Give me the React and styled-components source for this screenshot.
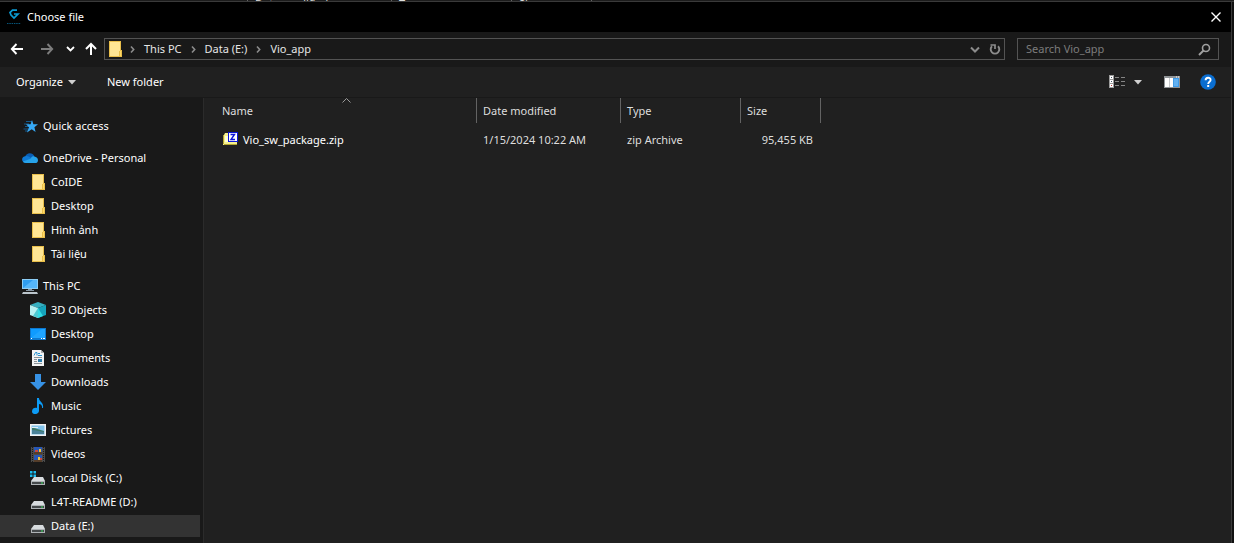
import styled, { createGlobalStyle } from 'styled-components'

const GlobalStyle = createGlobalStyle`
  * {
    box-sizing: border-box;
  }
  body {
    margin: 0;
    background-color: #111;
    color: #fff;
    font-family: "Noto Sans", "Open Sans", sans-serif;
    font-size: 11px;
    line-height: 16px;
  }
  button, input {
    font: inherit;
    color: inherit;
  }
`

const Screen = styled.div`
  display: flex;
  flex-direction: column;
  min-height: 100vh;
`

const BackWindow = styled.div`
  display: flex;
  height: 2px;
  padding-left: 247px;
  overflow: hidden;
  line-height: 8px;
  color: #dedede;
  background-color: #1c1c1c;
  border-bottom: 1px solid #3a3a3a;
`

const BackColumn = styled.span`
  width: ${({ $width }) => $width}px;
  padding-left: 7px;
  border-left: 1px solid #636363;
`

const Dialog = styled.div`
  flex: 1;
  display: flex;
  flex-direction: column;
  margin-right: 2px;
  border-right: 1px solid #3a3a3a;
  background-color: #202020;
`

const TitleBar = styled.header`
  display: flex;
  align-items: center;
  height: 30px;
  padding: 0 6px;
  gap: 5px;
  background-color: #000;
`

const Title = styled.h1`
  flex: 1;
  margin: 0;
  font-size: 11px;
  font-weight: 400;
`

const IconButton = styled.button`
  display: flex;
  align-items: center;
  justify-content: center;
  flex: none;
  width: ${({ $width }) => $width}px;
  height: 20px;
  padding: 0;
  border: none;
  background: none;
  color: ${({ $color }) => $color || '#fff'};

  &:hover {
    background-color: #333;
  }
`

const NavBar = styled.div`
  display: flex;
  align-items: center;
  height: 35px;
  padding: 0 12px 1px 2px;
  background-color: #191919;
`

const AddressBar = styled.nav`
  flex: 1;
  display: flex;
  align-items: center;
  height: 22px;
  padding-left: 2px;
  border: 1px solid #535353;
`

const Crumbs = styled.div`
  flex: 1;
  display: flex;
  align-items: center;
  gap: 8px;
  padding-left: 6px;
`

const Crumb = styled.a`
  color: #e6e6e6;
  text-decoration: none;
`

const SearchBox = styled.label`
  display: flex;
  align-items: center;
  width: 202px;
  height: 22px;
  margin-left: 12px;
  padding: 0 6px 0 8px;
  border: 1px solid #535353;
  color: #a0a0a0;
`

const SearchInput = styled.input`
  flex: 1;
  min-width: 0;
  padding: 0;
  border: none;
  outline: none;
  background: none;

  &::placeholder {
    color: #7c7c7c;
    opacity: 1;
  }
`

const ToolBar = styled.div`
  display: flex;
  align-items: center;
  height: 31px;
  padding: 0 9px 1px 10px;
  border-bottom: 1px solid #191919;
`

const ToolButton = styled.button`
  display: flex;
  align-items: center;
  gap: 5px;
  height: 24px;
  margin-right: 19px;
  padding: 0 6px;
  border: none;
  background: none;

  &:hover {
    background-color: #333;
  }
`

const ToolSpacer = styled.div`
  flex: 1;
`

const Content = styled.div`
  flex: 1;
  display: flex;
`

const SideBar = styled.nav`
  display: flex;
  flex-direction: column;
  gap: 10px;
  flex: none;
  width: 204px;
  padding: 17px 3px 5px 0;
  background-color: #191919;
  border-right: 1px solid #2b2b2b;
`

const Tree = styled.ul`
  display: flex;
  flex-direction: column;
  gap: 2px;
  margin: 0;
  padding: 0;
  list-style: none;
`

const TreeItem = styled.a`
  display: flex;
  align-items: center;
  gap: 5px;
  height: 22px;
  padding-left: ${({ $nested }) => ($nested ? 30 : 22)}px;
  background-color: ${({ $active }) => ($active ? '#333' : 'transparent')};
  color: #fff;
  text-decoration: none;

  &:hover {
    background-color: #333;
  }
`

const Files = styled.main`
  flex: 1;
  min-width: 0;
`

const FileTable = styled.table`
  border-collapse: separate;
  border-spacing: 0;
  table-layout: fixed;
  width: 617px;
  color: #dedede;
`

const HeadCell = styled.th`
  position: relative;
  width: ${({ $width }) => $width}px;
  height: 25px;
  padding: 0 6px;
  border-right: 1px solid #636363;
  font-weight: 400;
  text-align: left;

  &:first-child {
    padding-left: 18px;
  }
`

const SortMark = styled.span`
  position: absolute;
  top: 0;
  left: 0;
  right: 0;
  display: flex;
  justify-content: center;
  padding-left: 12px;
`

const Cell = styled.td`
  height: 34px;
  padding: 0 8px 0 6px;
  text-align: ${({ $align }) => $align || 'left'};

  &:first-child {
    padding-left: 18px;
  }
`

const FileName = styled.span`
  display: flex;
  align-items: center;
  gap: 5px;
  color: #fff;
`

const Svg = styled.svg`
  display: block;
  flex: none;
`

const Icon = ({ size = 16, children }) => (
  <Svg width={size} height={size} viewBox={`0 0 ${size} ${size}`} aria-hidden="true">
    {children}
  </Svg>
)

const AppLogo = () => (
  <Icon>
    <path d="M11 1.200H6.500L4 3.500 5 6l3 3 4-4H8" fill="none" stroke="#0b9bd3" strokeWidth="1.700" />
    <path d="M1 14.500h14" stroke="#07557a" strokeDasharray="1.500 .8" />
  </Icon>
)

const CloseIcon = () => (
  <Icon>
    <path d="M3.500 3.500l9 9M12.500 3.500l-9 9" stroke="#fff" strokeWidth="1.400" />
  </Icon>
)

const BackIcon = () => (
  <Icon>
    <path d="M14 8H3M7.500 3 2.800 8l4.700 5" fill="none" stroke="currentColor" strokeWidth="1.900" />
  </Icon>
)

const ForwardIcon = () => (
  <Icon>
    <path d="M2 8h11M8.500 3l4.700 5-4.700 5" fill="none" stroke="currentColor" strokeWidth="1.900" />
  </Icon>
)

const UpIcon = () => (
  <Icon>
    <path d="M8 14V3M3 8l5-5 5 5" fill="none" stroke="currentColor" strokeWidth="2" />
  </Icon>
)

const DownChevron = ({ wide }) => (
  <Icon size={12}>
    <path
      d={wide ? 'M3 4.500l4 4 4-4' : 'M3 4l3.500 3.500L10 4'}
      fill="none"
      stroke="currentColor"
      strokeWidth={wide ? 2 : 1.8}
    />
  </Icon>
)

const CrumbArrow = () => (
  <Svg width="7" height="16" viewBox="0 0 7 16" aria-hidden="true">
    <path d="M2 5.500 4.700 8.500 2 11.500" fill="none" stroke="#8c8c8c" strokeWidth="1.600" />
  </Svg>
)

const RefreshIcon = () => (
  <Icon>
    <path d="M6 5.200A4.300 4.300 0 1 0 12 5.200" fill="none" stroke="currentColor" strokeWidth="1.900" />
    <path d="M4.500 4H9v4" fill="none" stroke="currentColor" strokeWidth="1.700" />
  </Icon>
)

const SearchIcon = () => (
  <Icon>
    <circle cx="10" cy="7" r="3.500" fill="none" stroke="currentColor" strokeWidth="1.600" />
    <path d="M7.500 9.500 3 14" stroke="currentColor" strokeWidth="2" />
  </Icon>
)

const Caret = () => (
  <Svg width="8" height="8" viewBox="0 0 8 8" aria-hidden="true">
    <path d="M0 2h8L4 6.500z" fill="#d0d0d0" />
  </Svg>
)

const ViewIcon = () => (
  <Icon>
    <path d="M0 1h5v13H0z" fill="#9c9c9c" />
    <path d="M1 2h3v3H1zM1 6h3v3H1zM1 10h3v3H1z" fill="#fff" />
    <path d="M2 3h1v1H2zM2 7h1v1H2z" fill="#456" />
    <path d="M2 11h1v1H2z" fill="#b33" />
    <path d="M6 3.500h4M12 3.500h4M6 7.500h4M12 7.500h4M6 11.500h4M12 11.500h4" stroke="#858585" />
  </Icon>
)

const PaneIcon = () => (
  <Icon>
    <path d="M0 2h16v12H0z" fill="#8f9396" />
    <path d="M1 4h4v9H1zM5.500 4H9v9H5.500z" fill="#fff" />
    <path d="M9 4h6v9H9z" fill="#3f9be8" />
    <path d="M10 5h4v7h-4z" fill="#62b1f2" />
    <path d="M12 3h1M14 3h1" stroke="#fff" />
  </Icon>
)

const HelpIcon = () => (
  <Icon>
    <circle cx="8" cy="8" r="7.800" fill="#0a6ed1" />
    <path d="M5.600 6.200C5.600 3 10.600 3 10.600 5.900 10.600 7.700 8.200 7.700 8.200 9.900" fill="none" stroke="#fff" strokeWidth="1.900" />
    <path d="M7.200 11h2v2h-2z" fill="#fff" />
  </Icon>
)

const StarIcon = () => (
  <Icon>
    <path d="M4 3.500h6M2 6h5M3 8.500h5M1.500 11h5M3 13h3" stroke="#14598c" />
    <path d="M10 2l1.400 4.200H16l-3.600 3 1.200 4.800-3.900-2.700L5 14.500l2-5.200L4 6.300h4.600z" fill="#36a9f5" />
  </Icon>
)

const CloudIcon = () => (
  <Icon>
    <path d="M3 7C4 2.500 10.500 1.500 12.500 6.500L8 11 3 8z" fill="#0a5fb5" />
    <path d="M3.500 6.200C7 5.500 9 8 12 11l-8 2C-1.200 12.500-1 6.500 3.500 6.200z" fill="#0f7ad6" />
    <path d="M8.500 8.700C10 5.800 12 6 13 6.800 16.500 7.200 17 12 14 13H4C2 13 1 12 1 11.500z" fill="#27a3ea" />
  </Icon>
)

const FolderIcon = () => (
  <Icon>
    <path d="M2 0h12v9h1v7H2z" fill="#e9bf4b" />
    <path d="M3 1h10v9h-1v5H3z" fill="#ffe694" />
    <path d="M13 10h1v5h-1z" fill="#ffd966" />
  </Icon>
)

const ComputerIcon = () => (
  <Icon>
    <path d="M0 1h16v10H0z" fill="#8ccdf5" />
    <path d="M1 2h14v8H1z" fill="#2e9df0" />
    <path d="M1 10 11 2h4v8z" fill="#55b6fa" />
    <path d="M6 11h4v1h2v1H4v-1h2z" fill="#8796a3" />
    <path d="M1 14h14l1 2H0z" fill="#bcc5cc" />
  </Icon>
)

const CubeIcon = () => (
  <Icon>
    <path d="M8 0l8 3-8 3-8-3z" fill="#36afc0" />
    <path d="M0 3l8 3v10l-8-3z" fill="#b6f1f2" />
    <path d="M16 3 8 6v10l8-3z" fill="#16a4bc" />
    <path d="M8 6l5 8-5 2z" fill="#31dbe3" />
    <path d="M8 6v10l-5-2z" fill="#4ccbd3" />
  </Icon>
)

const DesktopIcon = () => (
  <Icon>
    <path d="M0 2h16v12H0z" fill="#0d78cf" />
    <path d="M1 3h14v9H1z" fill="#0f9bff" />
    <path d="M1 12 12 3h3v9z" fill="#1fa4ff" />
    <path d="M1 12.500h1M11 12.500h1M13 12.500h2" stroke="#fff" />
  </Icon>
)

const DocumentIcon = () => (
  <Icon>
    <path d="M2 0h9l3 3v13H2z" fill="#f3f3f3" />
    <path d="M11 0l3 3h-3z" fill="#a9a9a9" />
    <path d="M4 5.500 5.500 2.500H7v3M8 3.500h2M8 5.500h4" fill="none" stroke="#2792cf" />
    <path d="M4 7.500h8M4 9.500h3M4 11.500h3M4 13.500h8" stroke="#8b9297" />
    <path d="M8 9h4v3H8z" fill="#2b7cab" />
  </Icon>
)

const DownloadIcon = () => (
  <Icon>
    <path d="M5 0h6v8h5l-8 8-8-8h5z" fill="#3792e5" />
  </Icon>
)

const MusicIcon = () => (
  <Icon>
    <path d="M7 0h2c0 4 5 4 4 10h-1c.500-3-1.500-4-3-4v7c-.5 4-7 4-7 .5C2 10 5 9.500 7 10z" fill="#0c9bf5" />
  </Icon>
)

const PictureIcon = () => (
  <Icon>
    <path d="M0 2h16v12H0z" fill="#f2f2f2" />
    <path d="M1.500 3.500h13v9h-13z" fill="#82c4ec" />
    <path d="M2 6c5 0 7 2 12 3v1H2z" fill="#3e7a68" />
    <path d="M2 8c4 0 7 1 12 2v2H2z" fill="#4b839a" />
    <path d="M2 5h6v1H2z" fill="#e1f0f6" />
  </Icon>
)

const VideoIcon = () => (
  <Icon>
    <path d="M1 1h14v15H1z" fill="#4b4b4b" />
    <path d="M2.500 1v15M13.500 1v15" stroke="#1a1a1a" strokeDasharray="1 1" />
    <path d="M4 1h8v7H4zM4 9h8v7H4z" fill="#2857b5" />
    <path d="M4 6h8v2H4zM4 14h8v2H4z" fill="#553d29" />
    <path d="M9 3h2v3H9zM8 11h2v3H8z" fill="#efc23a" />
    <path d="M5 4h3v2H5zM10 12h2v2h-2z" fill="#c8473c" />
  </Icon>
)

const DriveIcon = ({ system }) => (
  <Icon>
    <path d="M4 7h9l2 4H1z" fill="#d8dcdf" />
    <path d="M1 11h14v4H1z" fill="#aeb2b5" />
    <path d="M2 12h12v2H2z" fill="#45494b" />
    <path d="M11 12.500h2v1h-2z" fill="#36e05a" />
    {system && (
      <>
        <path d="M0 1h6v6H0z" fill="#191919" />
        <path d="M0 1h2.500v2.500H0zM3.500 1H6v2.500H3.500zM0 4.500h2.500V7H0zM3.500 4.500H6V7H3.500z" fill="#18bdf2" />
      </>
    )}
  </Icon>
)

const ZipIcon = () => (
  <Icon>
    <path d="M1 3h1l1-2h4v1h8v10l-1 1H1z" fill="#f5f08d" />
    <path d="M1 3h1v9H1zM2 12h13v1H2z" fill="#b4a632" />
    <path d="M3 4h3v6H3z" fill="#ffffd4" />
    <path d="M6 0h10v10H6z" fill="#0a14d8" />
    <path d="M7 1h8v8H7z" fill="#fff" />
    <path d="M8.500 2.500h4L9 7.500h4" fill="none" stroke="#0a14d8" strokeWidth="1.400" />
  </Icon>
)

const crumbs = ['This PC', 'Data (E:)', 'Vio_app']

const backColumns = [
  { label: 'Date modified', width: 144 },
  { label: 'Type', width: 120 },
  { label: 'Size', width: 80 },
  { label: '', width: 20 },
]

const columns = [
  { label: 'Name', width: 273, sorted: true },
  { label: 'Date modified', width: 144 },
  { label: 'Type', width: 120 },
  { label: 'Size', width: 80 },
]

const files = [
  { name: 'Vio_sw_package.zip', date: '1/15/2024 10:22 AM', type: 'zip Archive', size: '95,455 KB' },
]

const tree = [
  [{ label: 'Quick access', icon: <StarIcon /> }],
  [
    { label: 'OneDrive - Personal', icon: <CloudIcon /> },
    { label: 'CoIDE', icon: <FolderIcon />, nested: true },
    { label: 'Desktop', icon: <FolderIcon />, nested: true },
    { label: 'Hình ảnh', icon: <FolderIcon />, nested: true },
    { label: 'Tài liệu', icon: <FolderIcon />, nested: true },
  ],
  [
    { label: 'This PC', icon: <ComputerIcon /> },
    { label: '3D Objects', icon: <CubeIcon />, nested: true },
    { label: 'Desktop', icon: <DesktopIcon />, nested: true },
    { label: 'Documents', icon: <DocumentIcon />, nested: true },
    { label: 'Downloads', icon: <DownloadIcon />, nested: true },
    { label: 'Music', icon: <MusicIcon />, nested: true },
    { label: 'Pictures', icon: <PictureIcon />, nested: true },
    { label: 'Videos', icon: <VideoIcon />, nested: true },
    { label: 'Local Disk (C:)', icon: <DriveIcon system />, nested: true },
    { label: 'L4T-README (D:)', icon: <DriveIcon />, nested: true },
    { label: 'Data (E:)', icon: <DriveIcon />, nested: true, active: true },
  ],
]

export default function App() {
  return (
    <Screen>
      <GlobalStyle />
      <BackWindow aria-hidden="true">
        {backColumns.map((col) => (
          <BackColumn key={col.width} $width={col.width}>{col.label}</BackColumn>
        ))}
      </BackWindow>
      <Dialog>
        <TitleBar>
          <AppLogo />
          <Title>Choose file</Title>
          <IconButton $width={18} aria-label="Close"><CloseIcon /></IconButton>
        </TitleBar>

        <NavBar>
          <IconButton $width={30} aria-label="Back"><BackIcon /></IconButton>
          <IconButton $width={30} $color="#7d7d7d" aria-label="Forward"><ForwardIcon /></IconButton>
          <IconButton $width={16} aria-label="Recent locations"><DownChevron /></IconButton>
          <IconButton $width={26} aria-label="Up"><UpIcon /></IconButton>
          <AddressBar aria-label="Address">
            <FolderIcon />
            <Crumbs>
              {crumbs.map((name) => [
                <CrumbArrow key={`${name}-arrow`} />,
                <Crumb key={name} href="#">{name}</Crumb>,
              ])}
            </Crumbs>
            <IconButton $width={20} $color="#8c8c8c" aria-label="Previous locations"><DownChevron wide /></IconButton>
            <IconButton $width={20} $color="#8c8c8c" aria-label="Refresh"><RefreshIcon /></IconButton>
          </AddressBar>
          <SearchBox>
            <SearchInput type="text" placeholder="Search Vio_app" aria-label="Search Vio_app" />
            <SearchIcon />
          </SearchBox>
        </NavBar>

        <ToolBar>
          <ToolButton>Organize <Caret /></ToolButton>
          <ToolButton>New folder</ToolButton>
          <ToolSpacer />
          <IconButton $width={18} aria-label="Change your view"><ViewIcon /></IconButton>
          <IconButton $width={24} aria-label="More options"><Caret /></IconButton>
          <IconButton $width={44} aria-label="Preview pane"><PaneIcon /></IconButton>
          <IconButton $width={28} aria-label="Help"><HelpIcon /></IconButton>
        </ToolBar>

        <Content>
          <SideBar aria-label="Folders">
            {tree.map((group) => (
              <Tree key={group[0].label}>
                {group.map((item) => (
                  <li key={item.label}>
                    <TreeItem href="#" $nested={item.nested} $active={item.active}>
                      {item.icon}
                      {item.label}
                    </TreeItem>
                  </li>
                ))}
              </Tree>
            ))}
          </SideBar>
          <Files>
            <FileTable>
              <thead>
                <tr>
                  {columns.map((col) => (
                    <HeadCell key={col.label} $width={col.width}>
                      {col.label}
                      {col.sorted && (
                        <SortMark>
                          <Svg width="9" height="5" viewBox="0 0 9 5" aria-hidden="true">
                            <path d="M.5 4.500l4-4 4 4" fill="none" stroke="#9a9a9a" />
                          </Svg>
                        </SortMark>
                      )}
                    </HeadCell>
                  ))}
                </tr>
              </thead>
              <tbody>
                {files.map((file) => (
                  <tr key={file.name}>
                    <Cell><FileName><ZipIcon />{file.name}</FileName></Cell>
                    <Cell>{file.date}</Cell>
                    <Cell>{file.type}</Cell>
                    <Cell $align="right">{file.size}</Cell>
                  </tr>
                ))}
              </tbody>
            </FileTable>
          </Files>
        </Content>
      </Dialog>
    </Screen>
  )
}
